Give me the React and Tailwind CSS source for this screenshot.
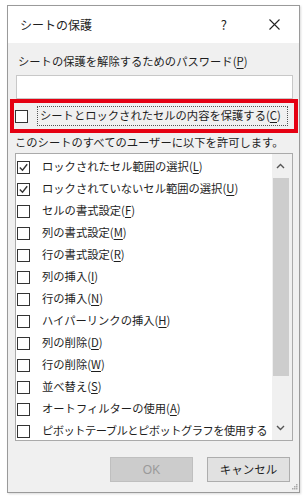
import React from "react";

const FONT = { fontFamily: '"Meiryo UI", "Noto Sans CJK JP", "Noto Sans", sans-serif' };

const ITEMS = [
  { label: "ロックされたセル範囲の選択", key: "L", checked: true },
  { label: "ロックされていないセル範囲の選択", key: "U", checked: true },
  { label: "セルの書式設定", key: "F" },
  { label: "列の書式設定", key: "M" },
  { label: "行の書式設定", key: "R" },
  { label: "列の挿入", key: "I" },
  { label: "行の挿入", key: "N" },
  { label: "ハイパーリンクの挿入", key: "H" },
  { label: "列の削除", key: "D" },
  { label: "行の削除", key: "W" },
  { label: "並べ替え", key: "S" },
  { label: "オートフィルターの使用", key: "A" },
  { label: "ピボットテーブルとピボットグラフを使用する", tight: true },
];

function Check({ checked }) {
  return (
    <span className="w-[13px] h-[13px] border border-[#333] bg-white flex items-center justify-center shrink-0">
      {checked && (
        <svg width="11" height="11" viewBox="0 0 11 11">
          <polyline points="1.8,5.5 4.5,8.2 9.2,2.3" fill="none" stroke="#333" strokeWidth="1.4" />
        </svg>
      )}
    </span>
  );
}

function Key({ k }) {
  return (
    <span>
      (<u className="underline-offset-2">{k}</u>)
    </span>
  );
}

export default function App() {
  return (
    <div className="w-[306px] h-[500px] bg-white pt-[5px] text-[#1e1e1e]" style={FONT}>
      <div className="ml-[7px] w-[293px] h-[488px] border border-[#9a9a9a] bg-[#f0f0f0] flex flex-col shadow-[1px_1px_2px_rgba(0,0,0,0.15)]">
        {/* title bar */}
        <div className="h-[37px] bg-white flex items-center pl-[12px] shrink-0">
          <span className="text-[12px] leading-none">シートの保護</span>
          <span className="ml-auto mr-[42px] text-[13px] leading-none">?</span>
          <svg className="mr-[19px]" width="11" height="11" viewBox="0 0 11 11">
            <path d="M0.5 0.5 L10.5 10.5 M10.5 0.5 L0.5 10.5" stroke="#222" strokeWidth="1.1" />
          </svg>
        </div>

        <div className="pl-[7px] pr-[6px] flex flex-col flex-1">
          <div className="mt-[11px] h-[16px] flex items-center text-[11.3px] leading-none pl-[3px]">
            シートの保護を解除するためのパスワード<Key k="P" />
          </div>
          <div className="mt-[5px] h-[24px] ml-[1px] bg-white border border-[#c8c8c8]" />

          {/* highlighted option */}
          <div className="-mx-[5px] h-[34px] border-4 border-[#e50012] flex items-center pl-[1px]">
            <Check />
            <div className="ml-[9px] h-[20px] w-[251px] border border-dotted border-[#555] flex items-center pl-[2px] text-[11.3px] leading-none">
              シートとロックされたセルの内容を保護する<Key k="C" />
            </div>
          </div>

          <div className="mt-[2px] h-[16px] flex items-center text-[11.3px] leading-none">
            このシートのすべてのユーザーに以下を許可します。
          </div>

          {/* list */}
          <div className="mt-[2px] h-[288px] bg-white border border-[#aaa] flex overflow-hidden">
            <div className="flex-1 pt-[2px] pl-[1px] overflow-hidden">
              {ITEMS.map((it, i) => (
                <div key={i} className="h-[22px] flex items-center">
                  <Check checked={it.checked} />
                  <span
                    className={`ml-[12px] text-[11.3px] leading-none whitespace-nowrap ${
                      it.tight ? "tracking-[-0.55px]" : ""
                    }`}
                  >
                    {it.label}
                    {it.key && <Key k={it.key} />}
                  </span>
                </div>
              ))}
            </div>
            <div className="w-[20px] bg-[#f0f0f0] flex flex-col items-center shrink-0 pr-[3px]">
              <div className="h-[24px] flex items-center justify-center">
                <svg width="9" height="6" viewBox="0 0 9 6">
                  <polyline points="1,5 4.5,1.5 8,5" fill="none" stroke="#555" strokeWidth="1.4" />
                </svg>
              </div>
              <div className="w-[16px] h-[198px] bg-[#cdcdcd]" />
              <div className="flex-1" />
              <div className="h-[24px] flex items-center justify-center">
                <svg width="9" height="6" viewBox="0 0 9 6">
                  <polyline points="1,1 4.5,4.5 8,1" fill="none" stroke="#555" strokeWidth="1.4" />
                </svg>
              </div>
            </div>
          </div>

          {/* buttons */}
          <div className="mt-[16px] flex justify-end gap-[14px] mr-[3px]">
            <div
              className="w-[83px] h-[25px] bg-[#cccccc] border border-[#bfbfbf] flex items-center justify-center text-[12px] text-[#9a9a9a]"
              style={{ fontFamily: '"Liberation Sans", sans-serif' }}
            >
              OK
            </div>
            <div className="w-[83px] h-[25px] bg-[#e1e1e1] border border-[#adadad] flex items-center justify-center text-[11.5px]">
              キャンセル
            </div>
          </div>

          <div className="mt-auto mb-[2px] -mr-[5px] self-end">
            <svg width="7" height="7" viewBox="0 0 7 7">
              <rect x="5" y="1" width="1.5" height="1.5" fill="#aaa" />
              <rect x="3" y="3" width="1.5" height="1.5" fill="#aaa" />
              <rect x="5" y="3" width="1.5" height="1.5" fill="#aaa" />
              <rect x="1" y="5" width="1.5" height="1.5" fill="#aaa" />
              <rect x="3" y="5" width="1.5" height="1.5" fill="#aaa" />
              <rect x="5" y="5" width="1.5" height="1.5" fill="#aaa" />
            </svg>
          </div>
        </div>
      </div>
    </div>
  );
}
